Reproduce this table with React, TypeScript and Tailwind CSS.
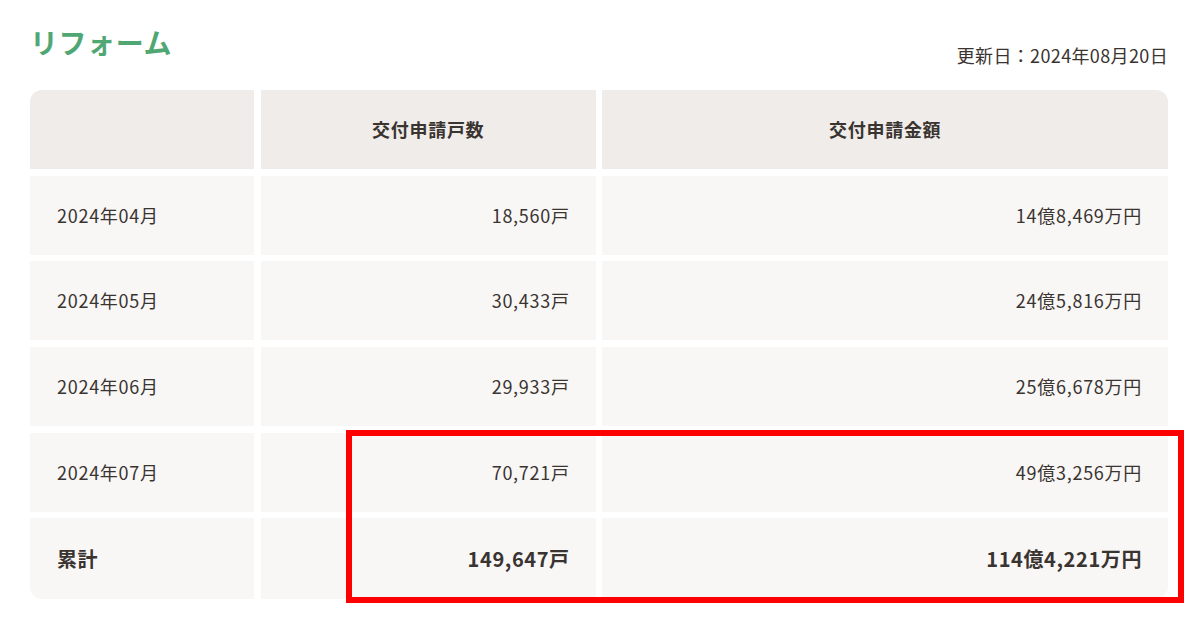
const rows = [
  { month: "2024年04月", count: "18,560戸", amount: "14億8,469万円" },
  { month: "2024年05月", count: "30,433戸", amount: "24億5,816万円" },
  { month: "2024年06月", count: "29,933戸", amount: "25億6,678万円" },
  { month: "2024年07月", count: "70,721戸", amount: "49億3,256万円" },
];

export default function App() {
  return (
    <div
      className="relative w-[1200px] h-[632px] bg-white text-[#3a3431]"
      style={{ fontFamily: '"Noto Sans CJK JP", "Noto Sans", sans-serif' }}
    >
      <div className="pl-[30px] pr-[32px] pt-[22px]">
        <div className="flex items-end justify-between">
          <h1 className="text-[28px] font-bold leading-[40px] text-[#50a773] tracking-[0.02em]">リフォーム</h1>
          <p className="text-[18px] leading-[26px] -mb-[6px] tracking-[0.02em]">更新日：2024年08月20日</p>
        </div>

        <div className="mt-[28px] grid grid-cols-[224px_335px_1fr] gap-x-[6.7px] gap-y-[6.7px] text-[18px] tracking-[0.04em]">
          <div className="h-[79px] bg-[#f0ecea] rounded-tl-[12px]" />
          <div className="h-[79px] bg-[#f0ecea] flex items-center justify-center font-bold">交付申請戸数</div>
          <div className="h-[79px] bg-[#f0ecea] rounded-tr-[12px] flex items-center justify-center font-bold">交付申請金額</div>

          {rows.map((r) => (
            <div key={r.month} className="contents">
              <div className="h-[79px] bg-[#f8f7f6] flex items-center pl-[27px]">{r.month}</div>
              <div className="h-[79px] bg-[#f8f7f6] flex items-center justify-end pr-[26px]">{r.count}</div>
              <div className="h-[79px] bg-[#f8f7f6] flex items-center justify-end pr-[26px]">{r.amount}</div>
            </div>
          ))}

          <div className="h-[81px] bg-[#f8f7f6] rounded-bl-[12px] flex items-center pl-[27px] font-bold text-[20px] tracking-[0.03em]">累計</div>
          <div className="h-[81px] bg-[#f8f7f6] flex items-center justify-end pr-[26px] font-bold text-[20px] tracking-[0.03em]">149,647戸</div>
          <div className="h-[81px] bg-[#f8f7f6] rounded-br-[12px] flex items-center justify-end pr-[26px] font-bold text-[20px] tracking-[0.03em]">114億4,221万円</div>
        </div>
      </div>

      <div className="absolute left-[346px] top-[430px] w-[838px] h-[173px] border-[6px] border-[#ff0000]" />
    </div>
  );
}
